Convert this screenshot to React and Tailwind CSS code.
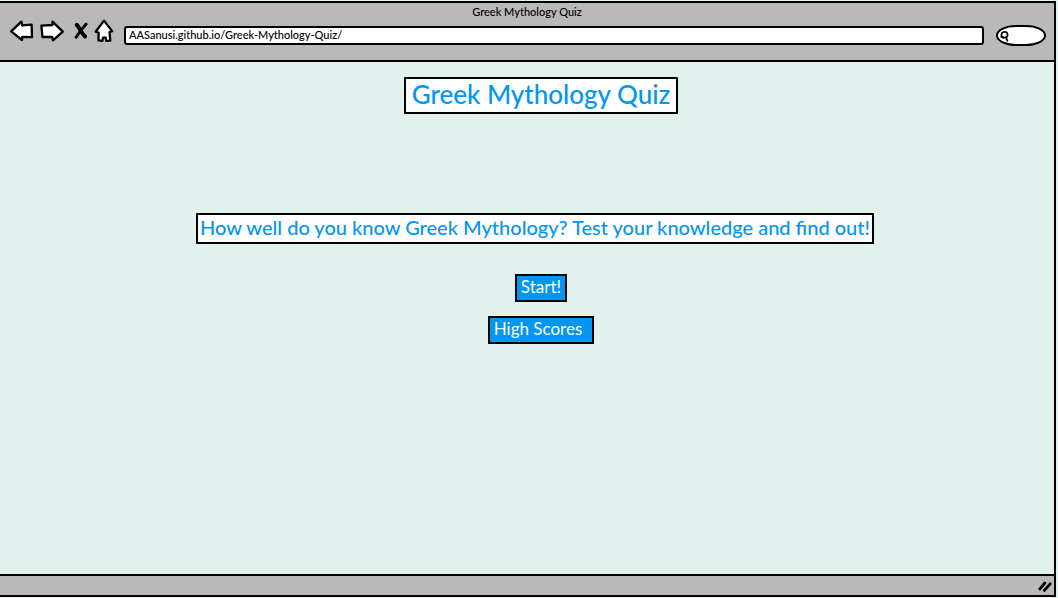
function ArrowIcon() {
  return (
    <svg width="24" height="22" viewBox="0 0 24 22" fill="#fff" stroke="#000" strokeWidth="2.3" strokeLinejoin="round" aria-hidden="true">
      <path d="M1.2 11.4 L11.3 1.6 L12.3 5.4 L21.6 4.6 L22 17.2 L12.3 16.8 L12 20 Z" />
    </svg>
  );
}

function ForwardIcon() {
  return (
    <svg width="24" height="22" viewBox="0 0 24 22" fill="#fff" stroke="#000" strokeWidth="2.3" strokeLinejoin="round" aria-hidden="true">
      <path d="M1.4 5.7 L12.4 5 L12.5 1.6 L22.8 11.6 L13 20.4 L12.1 16.8 L2.4 17 Z" />
    </svg>
  );
}

function StopIcon() {
  return (
    <svg width="14" height="18" viewBox="0 0 14 18" fill="none" stroke="#000" strokeLinecap="round" aria-hidden="true">
      <path d="M2.8 2.8 C5 5 8 12 11 14.4" strokeWidth="4" />
      <path d="M12 2.2 C9 6 5 11 2.2 15.2" strokeWidth="3" />
    </svg>
  );
}

function HomeIcon() {
  return (
    <svg width="20" height="24" viewBox="0 0 20 24" fill="#fff" stroke="#000" strokeWidth="2.3" strokeLinejoin="round" aria-hidden="true">
      <path d="M10 1.6 L18.2 12.1 L15.5 13 L16.3 21.6 L12.2 21.8 L11.8 18.6 L9 18.6 L8.4 21.8 L4.5 21.4 L4.6 13.5 L1.6 12.7 Z" />
    </svg>
  );
}

function SearchIcon() {
  return (
    <svg className="pointer-events-none absolute left-1 top-1.5" width="10" height="11" viewBox="0 0 10 11" fill="none" stroke="#000" strokeWidth="1.7" strokeLinecap="round" aria-hidden="true">
      <path d="M1.4 4.2 C1.2 0.2 7.2 -0.2 7.6 3.6 C7.8 7.4 1.8 7.8 1.4 4.2 Z" />
      <path d="M6 6.6 L7.4 9.8 M3.2 6.8 L1.2 5.8" />
    </svg>
  );
}

function BrowserBar() {
  return (
    <header className="h-[59px] border-b-2 border-black bg-[#b9b9b9]">
      <p className="pt-0.5 text-center text-[11px] leading-3.5">Greek Mythology Quiz</p>
      <div className="flex items-start pl-2.5 pr-2">
        <nav className="flex h-6 items-center" aria-label="Browser">
          <button type="button" aria-label="Back" className="mr-1.5"><ArrowIcon /></button>
          <button type="button" aria-label="Forward" className="mr-2.5"><ForwardIcon /></button>
          <button type="button" aria-label="Stop" className="mr-1.5"><StopIcon /></button>
          <button type="button" aria-label="Home" className="mr-2.5"><HomeIcon /></button>
        </nav>
        <input
          type="text"
          aria-label="Address"
          defaultValue="AASanusi.github.io/Greek-Mythology-Quiz/"
          className="mt-[7px] h-[19px] min-w-0 flex-1 rounded-[3px] border-2 border-black bg-white px-[3px] pb-0.5 text-[11px] leading-3.5 outline-none"
        />
        <div className="relative ml-3 mt-1.5 h-[21px] w-[50px]">
          <input type="search" aria-label="Search" className="block h-full w-full rounded-[40%/50%] border-2 border-black bg-white pl-3.5 text-[11px] outline-none" />
          <SearchIcon />
        </div>
      </div>
    </header>
  );
}

export default function App() {
  return (
    <div className="min-h-screen bg-[#e1f2ee] py-px pr-0.5 font-['Lato',sans-serif] font-medium text-black">
      <div className="flex min-h-[calc(100vh-2px)] flex-col border-y-2 border-r-2 border-black">
        <BrowserBar />
        <main className="flex flex-1 flex-col items-center pt-[15px]">
          <div className="pl-7">
            <h1 className="rounded-[1px] border-2 border-black bg-white px-1.5 pb-0.5 text-[26px] leading-[31px] text-[#0296f1]">Greek Mythology Quiz</h1>
          </div>
          <div className="pl-4 pt-[99px]">
            <p className="rounded-[1px] border-2 border-black bg-white px-0.5 pb-0.5 text-[20px] leading-[25px] text-[#0296f1]">
              How well do you know Greek Mythology? Test your knowledge and find out!
            </p>
          </div>
          <div className="flex flex-col items-center gap-3.5 pl-7 pt-[30px]">
            <button type="button" className="border-2 border-black bg-[#0296f1] px-1 pb-0.5 text-[17px] font-normal leading-[22px] text-white">Start!</button>
            <button type="button" className="border-2 border-black bg-[#0296f1] pb-0.5 pl-1 pr-2.5 text-[17px] font-normal leading-[22px] text-white">High Scores</button>
          </div>
        </main>
        <footer className="flex h-[21px] items-center justify-end border-t-2 border-black bg-[#b9b9b9] pr-0.5">
          <svg width="14" height="13" viewBox="0 0 14 13" stroke="#000" strokeWidth="2.8" strokeLinecap="round" aria-hidden="true">
            <path d="M1.8 10 L6.8 4 M6.4 11.4 L12.2 4.8" />
          </svg>
        </footer>
      </div>
    </div>
  );
}
